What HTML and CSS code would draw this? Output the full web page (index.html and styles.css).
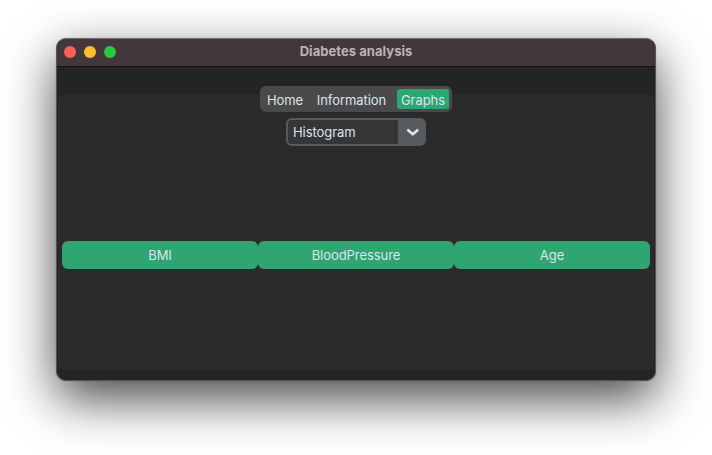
FILE: index.html
```html
<!DOCTYPE html>
<html lang="en">
<head>
<meta charset="utf-8">
<title>Diabetes analysis</title>
<link rel="stylesheet" href="styles.css">
</head>
<body>
<main class="window">
  <header class="titlebar">
    <div class="lights">
      <span class="light close"></span>
      <span class="light minimize"></span>
      <span class="light maximize"></span>
    </div>
    <h1 class="title">Diabetes analysis</h1>
  </header>
  <div class="content">
    <nav class="tabs">
      <button class="tab home">Home</button>
      <button class="tab information">Information</button>
      <button class="tab graphs selected">Graphs</button>
    </nav>
    <section class="panel">
      <div class="select">
        <span class="select-value">Histogram</span>
        <span class="select-arrow">
          <svg width="14" height="10" viewBox="0 0 14 10"><path d="M3.2 3.3 L7.8 7.3 L12.4 3.3" fill="none" stroke="#dce4ee" stroke-width="2.7" stroke-linecap="round" stroke-linejoin="round"/></svg>
        </span>
      </div>
      <div class="actions">
        <button class="action">BMI</button>
        <button class="action">BloodPressure</button>
        <button class="action">Age</button>
      </div>
    </section>
  </div>
</main>
</body>
</html>
```
FILE: styles.css
```css
* {
  box-sizing: border-box;
}

body {
  margin: 0;
  height: 455px;
  padding: 38px 56px 0;
  overflow: hidden;
  background: #fff;
  font-family: Inter, "Liberation Sans", sans-serif;
  font-size: 13px;
  line-height: 16px;
  letter-spacing: -0.06px;
  color: #dce4ee;
}

button {
  margin: 0;
  padding: 0;
  border: 0;
  background: none;
  font: inherit;
  letter-spacing: inherit;
  color: inherit;
}

.window {
  display: flex;
  flex-direction: column;
  width: 600px;
  height: 343px;
  border-radius: 10px;
  overflow: hidden;
  border: 1px solid #555354;
  border-top-color: #746f71;
  background: #242424;
  box-shadow: 0 0 1px rgba(0, 0, 0, 0.5), 0 18px 50px rgba(0, 0, 0, 0.72);
}

.titlebar {
  display: grid;
  grid-template-columns: 60px 1fr 60px;
  align-items: center;
  height: 28px;
  flex: none;
  padding-bottom: 1px;
  border-bottom: 1px solid #161415;
  background: #43373b;
}

.lights {
  display: flex;
  gap: 8px;
  padding-left: 7px;
}

.light {
  width: 12px;
  height: 12px;
  border-radius: 50%;
}

.close {
  background: #ff5f57;
}

.minimize {
  background: #febc2e;
}

.maximize {
  background: #28c840;
}

.title {
  margin: 0;
  padding-bottom: 3px;
  text-align: center;
  font-size: 13px;
  font-weight: 700;
  letter-spacing: 0.05px;
  color: #bdb3b7;
}

.content {
  display: flex;
  flex-direction: column;
  flex: 1;
  padding: 19px 1px 10px;
}

.tabs {
  display: flex;
  align-self: center;
  width: 192px;
  height: 26px;
  padding: 3px;
  flex: none;
  border-radius: 6px;
  background: #4a4a4a;
  z-index: 1;
}

.tab {
  height: 20px;
  padding-top: 2px;
  border-radius: 3px;
  white-space: nowrap;
}

.home {
  width: 43px;
  padding-left: 1px;
}

.information {
  width: 91px;
}

.graphs {
  width: 52px;
}

.selected {
  background: #2fa572;
}

.panel {
  display: flex;
  flex-direction: column;
  flex: 1;
  margin-top: -18px;
  padding: 24px 4px 0;
  border-radius: 6px;
  background: #2b2b2b;
}

.select {
  display: flex;
  align-self: center;
  width: 140px;
  height: 28px;
  padding: 2px 0 2px 2px;
  border-radius: 6px;
  background: #565b5e;
}

.select-value {
  flex: 1;
  padding: 4px 0 0 5px;
  border-radius: 4px 0 0 4px;
  background: #343638;
}

.select-arrow {
  display: grid;
  place-items: center;
  width: 28px;
}

.actions {
  display: grid;
  grid-template-columns: repeat(3, 196px);
  margin-top: 95px;
}

.action {
  height: 28px;
  border-radius: 6px;
  background: #2fa572;
}
```
